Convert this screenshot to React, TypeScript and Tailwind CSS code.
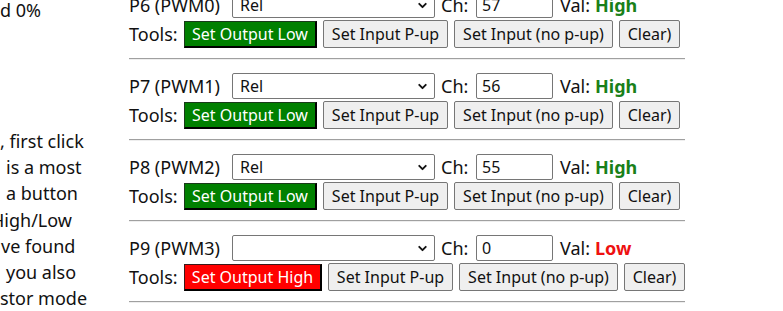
import { ChevronDown } from "lucide-react";

type Pin = {
  name: string;
  mode: string;
  ch: string;
  high: boolean;
};

const pins: Pin[] = [
  { name: "P6 (PWM0)", mode: "Rel", ch: "57", high: true },
  { name: "P7 (PWM1)", mode: "Rel", ch: "56", high: true },
  { name: "P8 (PWM2)", mode: "Rel", ch: "55", high: true },
  { name: "P9 (PWM3)", mode: "", ch: "0", high: false },
];

const lines = [
  { text: ", first click", cls: "ml-0" },
  { text: "is a most", cls: "ml-[6px]" },
  { text: "a button", cls: "ml-[6px]" },
  { text: "High/Low", cls: "-ml-[9px]" },
  { text: "ve found", cls: "ml-[1px]" },
  { text: "you also", cls: "ml-[6px]" },
  { text: "stor mode", cls: "ml-0" },
];

function PinBlock({ pin }: { pin: Pin }) {
  return (
    <div>
      <div className="flex h-[28px] items-center whitespace-nowrap">
        <span className="w-[103px]">{pin.name}</span>
        <div className="relative flex h-[26px] w-[203px] items-center rounded-[2px] border border-[#767676] bg-white pl-[7px] text-[16px]">
          {pin.mode}
          <ChevronDown className="absolute right-[5px] top-[6px] size-[13px]" strokeWidth={3.5} />
        </div>
        <span className="ml-[6px] w-[35px]">Ch:</span>
        <div className="flex h-[26px] w-[77px] items-center rounded-[2px] border border-[#767676] bg-white pl-[5px] text-[16px]">
          {pin.ch}
        </div>
        <span className="ml-[7px]">Val:</span>
        <span
          className={
            pin.high
              ? "ml-[5px] font-bold text-[#198019]"
              : "ml-[5px] font-bold text-[#ee1111]"
          }
        >
          {pin.high ? "High" : "Low"}
        </span>
      </div>
      <div className="flex h-[30px] items-center gap-[6px] whitespace-nowrap text-[16px]">
        <span className="w-[49px] text-[18px]">Tools:</span>
        {pin.high ? (
          <button className="h-[27px] w-[133px] border-t border-l border-r-2 border-b-2 border-t-[#1a3a1a] border-l-[#1a3a1a] border-r-black border-b-black bg-[#008000] text-white">
            Set Output Low
          </button>
        ) : (
          <button className="h-[27px] w-[138px] border-t border-l border-r-2 border-b-2 border-t-[#3a1a1a] border-l-[#3a1a1a] border-r-black border-b-black bg-[#ff0000] text-white">
            Set Output High
          </button>
        )}
        <button className="h-[28px] w-[125px] rounded-[2px] border border-[#767676] bg-[#efefef]">
          Set Input P-up
        </button>
        <button className="h-[28px] w-[159px] rounded-[2px] border border-[#767676] bg-[#efefef]">
          Set Input (no p-up)
        </button>
        <button className="h-[28px] w-[61px] rounded-[2px] border border-[#767676] bg-[#efefef]">
          Clear)
        </button>
      </div>
      <div className="mt-[9px] mb-[12px] h-[2px] w-[556px] border-t border-t-[#a0a0a0] border-b border-b-[#eeeeee]" />
    </div>
  );
}

export default function App() {
  return (
    <div className="flex h-[311px] w-[783px] overflow-hidden bg-white font-['Noto_Sans',sans-serif] text-[18px] text-[#111]">
      <div className="w-[129px] shrink-0 overflow-hidden leading-[26.2px]">
        <div className="-mt-[3px] whitespace-pre">d 0%</div>
        <div className="mt-[104.8px]">
          {lines.map((l) => (
            <div key={l.text} className={"whitespace-pre " + l.cls}>
              {l.text}
            </div>
          ))}
        </div>
      </div>
      <div className="-mt-[9px] flex flex-col">
        {pins.map((p) => (
          <PinBlock key={p.name} pin={p} />
        ))}
      </div>
    </div>
  );
}
